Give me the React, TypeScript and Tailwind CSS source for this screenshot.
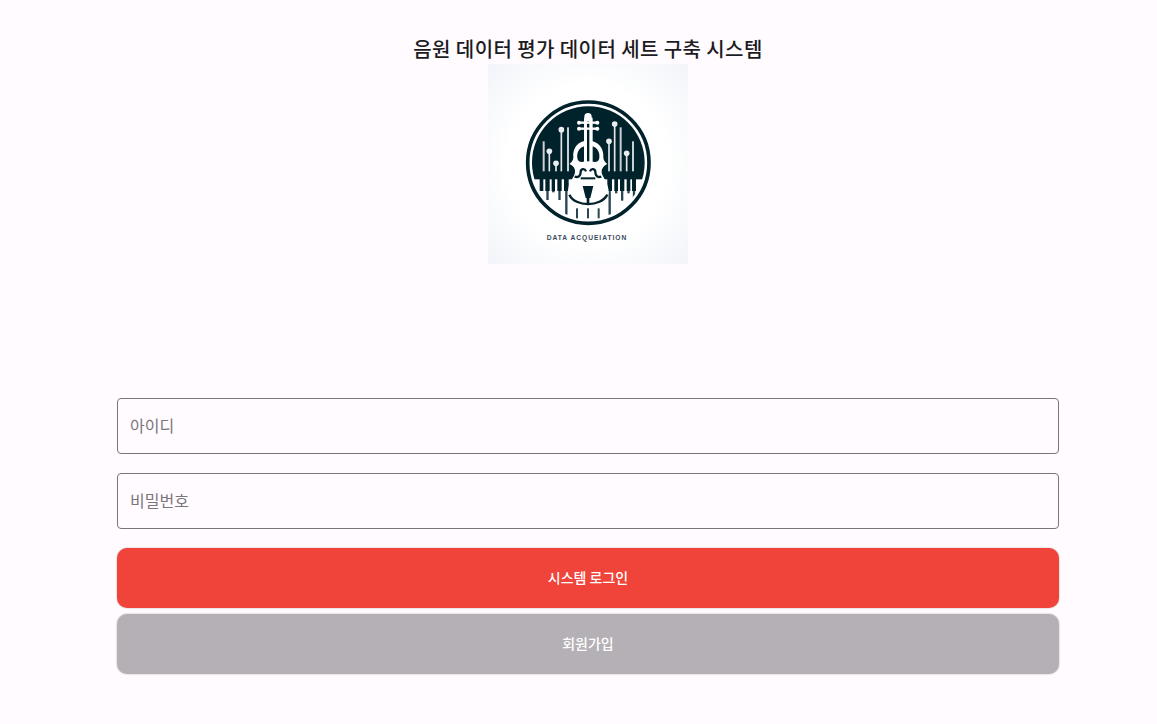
const dark = '#04202c';

function Logo() {
  const pins = [
    { x: 184, top: 262 },
    { x: 204, top: 298 },
    { x: 220, top: 197 },
    { x: 380, top: 180 },
    { x: 363, top: 232 },
    { x: 416, top: 268 },
  ];
  const lines = [
    { x: 167, top: 232 },
    { x: 240, top: 190 },
    { x: 398, top: 190 },
    { x: 435, top: 232 },
  ];
  const keys = [
    { x: 155, w: 11, bottom: 352 },
    { x: 172, w: 13, bottom: 408 },
    { x: 191, w: 10, bottom: 385 },
    { x: 208, w: 13, bottom: 408 },
    { x: 228, w: 14, bottom: 452 },
    { x: 358, w: 14, bottom: 452 },
    { x: 379, w: 11, bottom: 388 },
    { x: 396, w: 13, bottom: 410 },
    { x: 416, w: 11, bottom: 388 },
    { x: 432, w: 12, bottom: 410 },
  ];

  return (
    <svg viewBox="0 0 600 600" className="block w-[200px] h-[200px]">
      <defs>
        <radialGradient id="logo-bg" cx="50%" cy="50%" r="72%">
          <stop offset="55%" stopColor="#ffffff" />
          <stop offset="100%" stopColor="#f1f4f9" />
        </radialGradient>
        <clipPath id="logo-disc">
          <circle cx="301" cy="296" r="169" />
        </clipPath>
        <filter id="logo-soft">
          <feGaussianBlur stdDeviation="1.4" />
        </filter>
      </defs>
      <rect width="600" height="600" fill="url(#logo-bg)" />
      <g filter="url(#logo-soft)">
        <circle cx="301" cy="296" r="182" fill="none" stroke={dark} strokeWidth="11" />
        <g clipPath="url(#logo-disc)">
          <rect x="100" y="100" width="400" height="246" fill={dark} />
          {pins.map((p) => (
            <g key={p.x}>
              <rect x={p.x - 2.5} y={p.top} width="5" height={322 - p.top} fill="#e3e7ea" />
              <circle cx={p.x} cy={p.top} r="8.5" fill="#e9edf0" />
            </g>
          ))}
          {lines.map((l) => (
            <rect key={l.x} x={l.x - 3} y={l.top} width="6" height={322 - l.top} fill="#c9d0d6" />
          ))}
          {keys.map((k) => (
            <g key={k.x}>
              <rect x={k.x} y="345" width={k.w} height="36" fill={dark} />
              <rect x={k.x + k.w / 2 - 3.5} y="381" width="7" height={k.bottom - 381} fill="#2a4452" />
            </g>
          ))}
        </g>
        {/* violin body */}
        <path
          d="M286 232 C264 238 254 258 256 280 C256 290 250 296 244 300 C258 306 264 316 260 330 C254 345 240 360 240 385 C242 418 270 436 300 436 C332 436 360 418 362 385 C362 360 348 345 342 330 C338 316 346 306 358 300 C352 296 346 290 346 280 C348 258 336 238 314 232 Z"
          fill="#ffffff"
        />
        <path
          d="M291 246 C274 250 266 264 268 282 C269 294 280 296 291 292 Z M311 246 C328 250 336 264 334 282 C333 294 322 296 311 292 Z"
          fill={dark}
        />
        <rect x="288" y="160" width="26" height="135" rx="4" fill="#ffffff" />
        <rect x="297" y="172" width="7" height="120" fill={dark} />
        <circle cx="300" cy="158" r="11" fill="#ffffff" />
        {[176, 194].map((y) => (
          <g key={y}>
            <rect x="272" y={y - 3.5} width="58" height="7" fill="#ffffff" />
            <circle cx="273" cy={y} r="6" fill="#ffffff" />
            <circle cx="328" cy={y} r="6" fill="#ffffff" />
          </g>
        ))}
        {/* f holes and bridge */}
        <path
          d="M260 338 C272 342 278 334 278 324 C278 314 290 312 294 322 M340 338 C328 342 322 334 322 324 C322 314 310 312 306 322"
          fill="none"
          stroke={dark}
          strokeWidth="7"
        />
        <rect x="278" y="340" width="44" height="6" fill={dark} />
        {/* tailpiece and chin arc */}
        <path d="M284 366 L316 366 L307 402 L293 402 Z" fill={dark} />
        <rect x="296" y="400" width="8" height="22" fill={dark} />
        <path d="M244 392 C262 430 338 430 358 392" fill="none" stroke={dark} strokeWidth="7" />
        {[267, 300, 332].map((x) => (
          <rect key={x} x={x - 3} y="433" width="6" height="30" fill="#2a4452" />
        ))}
      </g>
      <text
        x="297"
        y="528"
        textAnchor="middle"
        fontFamily="'Liberation Sans', sans-serif"
        fontWeight="700"
        fontSize="20"
        letterSpacing="2.9"
        fill="#3b4a5a"
      >
        DATA ACQUEIATION
      </text>
    </svg>
  );
}

export default function App() {
  return (
    <div className="min-h-[724px] bg-[#fffbfe] pl-[117px] pr-[98px] font-['Noto_Sans_CJK_KR','Noto_Sans',sans-serif]">
      <div className="flex flex-col items-center pt-[34px]">
        <h1 className="text-[20px] leading-[30px] font-medium tracking-[0.42px] text-[#1c1b1f]">
          음원 데이터 평가 데이터 세트 구축 시스템
        </h1>
        <Logo />
      </div>

      <form className="mt-[134px] flex flex-col">
        <input
          type="text"
          placeholder="아이디"
          className="h-[56px] w-full rounded border border-[#79747e] bg-transparent pl-[12px] pr-3 pb-[2px] text-base outline-none placeholder:text-[#79767c]"
        />
        <input
          type="password"
          placeholder="비밀번호"
          className="mt-[19px] h-[56px] w-full rounded border border-[#79747e] bg-transparent pl-[12px] pr-3 pb-[2px] text-base outline-none placeholder:text-[#79767c]"
        />
        <button
          type="button"
          className="mt-[19px] h-[60px] w-full rounded-[10px] bg-[#f0433a] pb-[2px] text-sm font-medium text-white shadow-[0_0_2px_rgba(0,0,0,0.3)]"
        >
          시스템 로그인
        </button>
        <button
          type="button"
          className="mt-[6px] h-[60px] w-full rounded-[10px] bg-[#b5b0b5] pb-[2px] text-sm font-medium text-white shadow-[0_0_2px_rgba(0,0,0,0.3)]"
        >
          회원가입
        </button>
      </form>
    </div>
  );
}
